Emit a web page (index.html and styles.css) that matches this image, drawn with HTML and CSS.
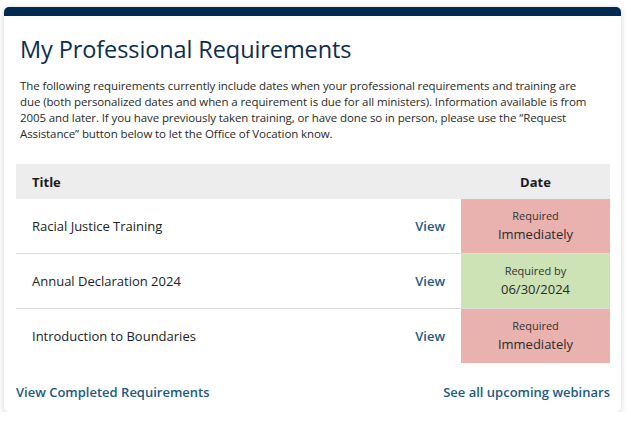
FILE: index.html
```html
<!DOCTYPE html>
<html lang="en">
<head>
<meta charset="utf-8">
<title>My Professional Requirements</title>
<link rel="stylesheet" href="styles.css">
</head>
<body>
<div class="card">
  <div class="card-head">
    <h1 class="title">My Professional Requirements</h1>
    <p class="intro">The following requirements currently include dates when your professional requirements and training are due (both personalized dates and when a requirement is due for all ministers). Information available is from 2005 and later. If you have previously taken training, or have done so in person, please use the “Request Assistance” button below to let the Office of Vocation know.</p>
  </div>
  <div class="table">
    <div class="row head">
      <div class="c-title">Title</div>
      <div class="c-view"></div>
      <div class="c-date">Date</div>
    </div>
    <div class="row">
      <div class="c-title">Racial Justice Training</div>
      <div class="c-view"><a href="#">View</a></div>
      <div class="c-date due-now"><span class="lbl">Required</span><span class="val">Immediately</span></div>
    </div>
    <div class="row">
      <div class="c-title">Annual Declaration 2024</div>
      <div class="c-view"><a href="#">View</a></div>
      <div class="c-date due-later"><span class="lbl">Required by</span><span class="val">06/30/2024</span></div>
    </div>
    <div class="row last">
      <div class="c-title">Introduction to Boundaries</div>
      <div class="c-view"><a href="#">View</a></div>
      <div class="c-date due-now"><span class="lbl">Required</span><span class="val">Immediately</span></div>
    </div>
  </div>
  <div class="links">
    <a href="#">View Completed Requirements</a>
    <a href="#">See all upcoming webinars</a>
  </div>
</div>
</body>
</html>
```

FILE: styles.css
```css
* { box-sizing: border-box; }
html, body { background: #fff; }
body {
  margin: 0;
  padding: 7px 10px 0 4px;
  font-family: "Open Sans", "Noto Sans", sans-serif;
  color: #222;
}
.card {
  width: 617px;
  height: 405px;
  border-top: 9px solid #002a52;
  border-radius: 5px;
  background: #fff;
  box-shadow: 0 1px 6px rgba(0,0,0,0.18);
  padding: 0 11px 0 12px;
  display: flex;
  flex-direction: column;
}
.card-head { padding: 0 4px; }
.title {
  margin: 17px 0 0;
  font-size: 23.5px;
  font-weight: 500;
  line-height: 32px;
  color: #0d2d4c;
  letter-spacing: -0.1px;
}
.intro {
  margin: 13px 0 0;
  padding-right: 14px;
  font-size: 11.5px;
  line-height: 16px;
  color: #2a2a2a;
  letter-spacing: -0.1px;
}
.table { margin-top: 22px; }
.row {
  display: grid;
  grid-template-columns: 1fr 120px 149px;
  height: 55px;
  border-bottom: 1px solid #dcdcdc;
  font-size: 13px;
}
.row.last { border-bottom: none; height: 54px; }
.row.head {
  height: 35px;
  background: #ededed;
  border-bottom: none;
  font-weight: 700;
  color: #1c1c1c;
}
.row > div { display: flex; align-items: center; }
.c-title { padding-left: 16px; }
.c-view { justify-content: flex-end; padding-right: 16px; }
.c-view a { color: #1d5a83; text-decoration: none; font-weight: 600; }
.c-date { justify-content: center; flex-direction: column; text-align: center; }
.row > .c-date { align-items: center; justify-content: center; }
.due-now { background: #eab2af; }
.due-later { background: #cde2b5; }
.lbl { font-size: 11px; line-height: 16px; color: #333; }
.val { font-size: 13px; line-height: 20px; color: #2a2a2a; }
.links {
  margin-top: auto;
  margin-bottom: 10px;
  display: flex;
  justify-content: space-between;
  font-size: 13px;
  font-weight: 600;
  line-height: 20px;
}
.links a { color: #1d5a83; text-decoration: none; }
```
